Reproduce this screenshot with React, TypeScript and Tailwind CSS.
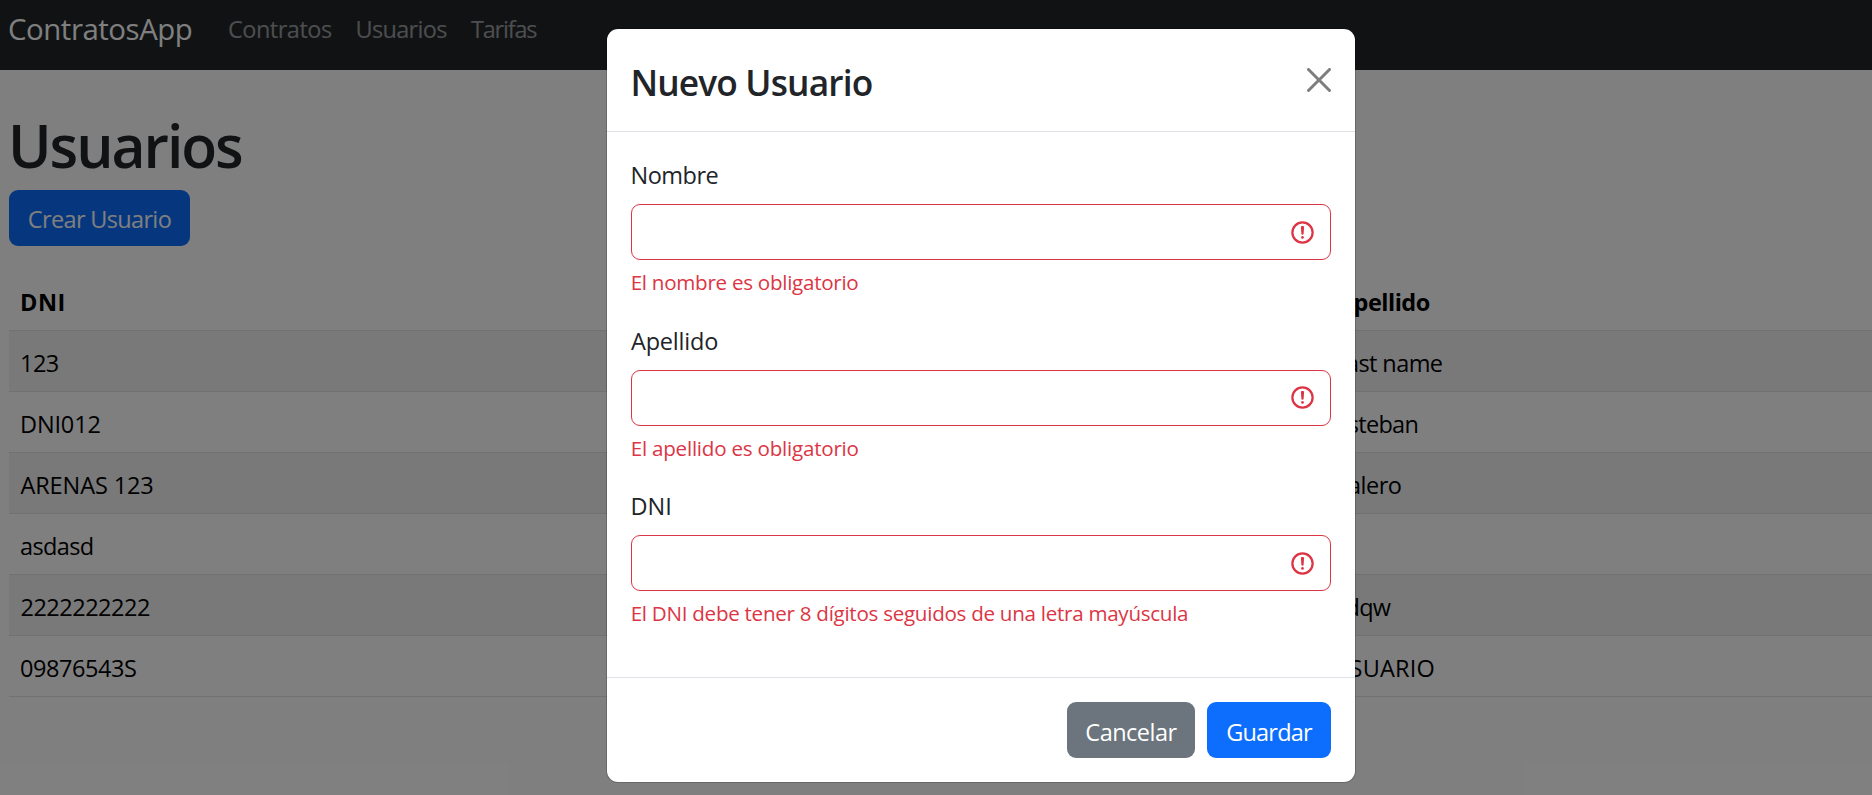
type Cell = { text: string; cls: string };

const rows: { dni: Cell; apellido: Cell }[] = [
  { dni: { text: '123', cls: 'tracking-[-0.55px]' }, apellido: { text: 'Last name', cls: 'w-[107.4px] tracking-[-0.6px]' } },
  { dni: { text: 'DNI012', cls: 'tracking-[-0.15px]' }, apellido: { text: 'Esteban', cls: 'w-[83.2px] tracking-[-0.7px]' } },
  { dni: { text: 'ARENAS 123', cls: 'ml-[0.5px] tracking-[-0.12px]' }, apellido: { text: 'Valero', cls: 'w-[66.4px] tracking-[-0.5px]' } },
  { dni: { text: 'asdasd', cls: 'tracking-[-0.62px]' }, apellido: { text: '', cls: '' } },
  { dni: { text: '2222222222', cls: 'ml-[0.5px] tracking-[-0.5px]' }, apellido: { text: 'dqw', cls: 'w-[55.2px] tracking-[-0.8px]' } },
  { dni: { text: '09876543S', cls: 'tracking-[-0.45px]' }, apellido: { text: 'USUARIO', cls: 'w-[100px] tracking-[0.2px]' } },
];

const fields = [
  { id: 'nombre', label: 'Nombre', labelCls: '-ml-[0.5px] tracking-[-0.5px]', error: 'El nombre es obligatorio', errorCls: 'tracking-[-0.28px]' },
  { id: 'apellido', label: 'Apellido', labelCls: 'tracking-[-0.19px]', error: 'El apellido es obligatorio', errorCls: 'tracking-[-0.23px]' },
  { id: 'dni', label: 'DNI', labelCls: '-ml-[0.5px]', error: 'El DNI debe tener 8 dígitos seguidos de una letra mayúscula', errorCls: 'tracking-[-0.28px]' },
];

function Navbar() {
  return (
    <nav className="flex h-[70px] items-start bg-[#212529] pl-2 pt-[11px]">
      <a className="w-[220px] text-[29.4px] leading-9 tracking-[-0.45px] text-white">ContratosApp</a>
      <a className="w-[127.5px] tracking-[-0.5px] text-white/55">Contratos</a>
      <a className="w-[115.5px] tracking-[-0.69px] text-white/55">Usuarios</a>
      <a className="tracking-[-1.2px] text-white/55">Tarifas</a>
    </nav>
  );
}

function UsersTable() {
  return (
    <div className="ml-[9px] mt-6 text-black">
      <div className="flex h-[61px] items-center border-b border-[#dee2e6] pl-[11px] pt-[3px] font-bold">
        <div className="w-[1315px] shrink-0 tracking-[0.5px]">DNI</div>
        <div className="flex w-[94.8px] shrink-0 justify-end tracking-[-0.5px]">Apellido</div>
      </div>
      {rows.map((r) => (
        <div key={r.dni.text} className="flex h-[61px] items-center border-b border-[#dee2e6] pl-[11px] pt-[3px] odd:bg-white even:bg-[#f2f2f2]">
          <div className="w-[1315px] shrink-0">
            <span className={r.dni.cls}>{r.dni.text}</span>
          </div>
          <div className={`flex shrink-0 justify-end whitespace-nowrap ${r.apellido.cls}`}>{r.apellido.text}</div>
        </div>
      ))}
    </div>
  );
}

function CloseIcon() {
  return (
    <svg viewBox="0 0 16 16" className="size-6" fill="#000">
      <path d="M.293.293a1 1 0 0 1 1.414 0L8 6.586 14.293.293a1 1 0 1 1 1.414 1.414L9.414 8l6.293 6.293a1 1 0 0 1-1.414 1.414L8 9.414l-6.293 6.293a1 1 0 0 1-1.414-1.414L6.586 8 .293 1.707a1 1 0 0 1 0-1.414z" />
    </svg>
  );
}

function InvalidIcon() {
  return (
    <svg viewBox="0 0 12 12" className="size-[27px] shrink-0" fill="none" stroke="#dc3545">
      <circle cx="6" cy="6" r="4.5" />
      <path strokeLinejoin="round" d="M5.8 3.6h.4L6 6.5z" />
      <circle cx="6" cy="8.2" r=".6" fill="#dc3545" stroke="none" />
    </svg>
  );
}

function Modal() {
  return (
    <div role="dialog" className="mt-7 ml-[606px] flex h-[755px] w-[750px] flex-col rounded-xl border border-black/[0.175] bg-white bg-clip-padding">
      <div className="flex h-[103px] shrink-0 items-center justify-between border-b border-[#dee2e6] px-6">
        <h4 className="-ml-[0.5px] pt-[3px] text-[35.3px] leading-[54px] font-semibold tracking-[-0.85px]">Nuevo Usuario</h4>
        <button aria-label="Close" className="opacity-50">
          <CloseIcon />
        </button>
      </div>
      <form className="flex flex-1 flex-col gap-6 px-6 pt-[25px]">
        {fields.map((f) => (
          <div key={f.id} className="flex flex-col">
            <label htmlFor={f.id} className={`mb-[11px] ${f.labelCls}`}>{f.label}</label>
            <div className="flex h-14 items-center rounded-[9px] border border-[#dc3545] pr-[14px] pl-[18px]">
              <input id={f.id} className="h-full min-w-0 flex-1 bg-transparent outline-none" />
              <InvalidIcon />
            </div>
            <div className={`mt-[7px] -ml-[0.3px] text-[20.6px] leading-[31.5px] whitespace-nowrap text-[#dc3545] ${f.errorCls}`}>{f.error}</div>
          </div>
        ))}
      </form>
      <div className="flex shrink-0 justify-end gap-3 border-t border-[#dee2e6] p-6 text-white">
        <button className="h-14 w-32 rounded-[9px] bg-[#6c757d] pt-[3px] tracking-[-0.5px]">Cancelar</button>
        <button className="h-14 w-[124px] rounded-[9px] bg-[#0d6efd] pt-[3px] tracking-[-0.8px]">Guardar</button>
      </div>
    </div>
  );
}

export default function App() {
  return (
    <div className="relative h-[795px] w-full overflow-hidden bg-white font-['Open_Sans','Noto_Sans',sans-serif] text-[23.5px] leading-9 text-[#212529]">
      <Navbar />
      <main className="pt-[39px]">
        <h1 className="ml-2 h-[81px] text-[58.8px] leading-[72px] font-semibold tracking-[-2.05px]">Usuarios</h1>
        <button className="ml-[9px] block h-14 w-[181px] rounded-[9px] bg-[#0d6efd] pt-0.5 tracking-[-0.66px] text-white">Crear Usuario</button>
        <UsersTable />
      </main>
      <div className="absolute inset-0 bg-black/50" />
      <div className="absolute inset-0">
        <Modal />
      </div>
    </div>
  );
}
